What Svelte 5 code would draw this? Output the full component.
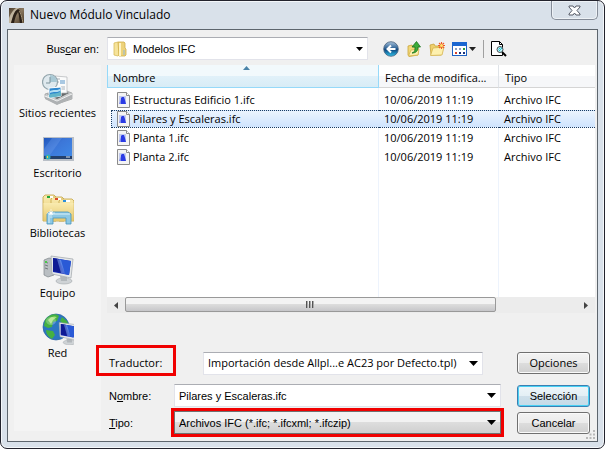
<script>
  let fileName = 'Pilares y Escaleras.ifc'
  let selected = 'Pilares y Escaleras.ifc'

  const places = [
    { id: 'recent', label: 'Sitios recientes' },
    { id: 'desktop', label: 'Escritorio' },
    { id: 'libraries', label: 'Bibliotecas' },
    { id: 'computer', label: 'Equipo' },
    { id: 'network', label: 'Red' }
  ]

  const files = [
    'Estructuras Edificio 1.ifc',
    'Pilares y Escaleras.ifc',
    'Planta 1.ifc',
    'Planta 2.ifc'
  ]

  function pick(file) {
    selected = file
    fileName = file
  }
</script>

<div class="dialog">
  <header>
    <svg class="logo" width="15" height="15" viewBox="0 0 15 15">
      <defs>
        <linearGradient id="logo-bg" x2="1" y2="1">
          <stop offset="0" stop-color="#4f402f" />
          <stop offset="0.5" stop-color="#8a7860" />
          <stop offset="1" stop-color="#4a3b29" />
        </linearGradient>
      </defs>
      <rect width="15" height="15" fill="url(#logo-bg)" />
      <path d="M0 15V10C2 5 4 2 7 0h3L5 6 2 15z" fill="#e0d6c0" opacity="0.700" />
      <path d="M2 15C4 8 5 3 9 1c3 2 4 7 5 14h-3C10 9 10 6 9 4 7 7 6 10 5 15z" fill="#2b2118" />
      <path d="M10 3c2 2 3 7 4 12" fill="none" stroke="#a8977a" />
    </svg>
    <h1>Nuevo Módulo Vinculado</h1>
    <button class="close" aria-label="Cerrar">
      <svg width="13" height="11" viewBox="0 0 13 11">
        <path d="M1 1h4l1.500 2L8 1h4v1L9 5.500 12 9v1H8L6.500 8 5 10H1V9l3-3.500L1 2z" fill="#fff" stroke="#565b67" />
      </svg>
    </button>
  </header>

  <main>
    <div class="lookup">
      <label for="folder">Bus<u>c</u>ar en:</label>
      <div class="combo folder">
        <svg class="folder-icon" width="16" height="16" viewBox="0 0 16 16">
          <path d="M2 2l4-1 1 1v12l-1 1-4-1z" fill="#f6e39a" stroke="#d9bc5c" stroke-width="0.800" />
          <path d="M6 1h6l1 1v5l1 1v6l-1 1H7z" fill="#edd27a" stroke="#cfae4b" stroke-width="0.800" />
          <path d="M8 2v13" stroke="#fff4c4" stroke-width="2" />
          <path d="M12 9v5" stroke="#8fb8d8" />
        </svg>
        <select id="folder">
          <option>Modelos IFC</option>
        </select>
        <svg class="arrow" width="7" height="4"><path d="M0 0h7L3.500 4z" /></svg>
      </div>
      <div class="tools">
        <button aria-label="Atrás">
          <svg width="16" height="16" viewBox="0 0 16 16">
            <defs>
              <linearGradient id="back" x2="0" y2="1">
                <stop offset="0" stop-color="#a9c3dc" />
                <stop offset="0.450" stop-color="#2e6397" />
                <stop offset="0.550" stop-color="#0e4780" />
                <stop offset="1" stop-color="#2fc4ec" />
              </linearGradient>
            </defs>
            <circle cx="8" cy="8" r="7.300" fill="url(#back)" stroke="#49617c" stroke-width="0.800" />
            <path d="M12.500 8H4.500M8 4.500L4.500 8 8 11.500" fill="none" stroke="#fff" stroke-width="2" />
          </svg>
        </button>
        <button aria-label="Subir un nivel">
          <svg width="16" height="16" viewBox="0 0 16 16">
            <path d="M2 5l4-1 1 2h5v8l-9 1.500L2 14z" fill="#f2d878" stroke="#c9a53b" stroke-width="0.800" />
            <path d="M2.500 15L5 9l8-1-1 6z" fill="#fdf0ae" stroke="#d5b44c" stroke-width="0.800" />
            <path d="M6 12c3-1 3-3 3-6H6l4.500-5.500L14.500 6H12c0 4-2 6-6 6z" fill="#3cab38" stroke="#1b7220" stroke-width="0.800" />
          </svg>
        </button>
        <button aria-label="Crear nueva carpeta">
          <svg width="16" height="16" viewBox="0 0 16 16">
            <path d="M1 4l4-1 1 2h6v9H2z" fill="#efd06c" stroke="#c9a53b" stroke-width="0.800" />
            <path d="M1.500 14.500L4 7l11-1-2 8z" fill="#fdf0ae" stroke="#d5b44c" stroke-width="0.800" />
            <path d="M12.500 1v7M9 4.500h7M10 2l5 5M15 2l-5 5" stroke="#ef5c26" stroke-width="1.100" />
            <circle cx="12.500" cy="4.500" r="1.500" fill="#ffe26b" />
          </svg>
        </button>
        <button class="views" aria-label="Menú Ver">
          <svg width="24" height="16" viewBox="0 0 24 16">
            <rect x="0.500" y="1.500" width="14" height="13" fill="#fff" stroke="#1d62c4" />
            <path d="M0 1h15v4H0z" fill="#1a66d0" />
            <path d="M3 7h2v2H3zM7 7h2v2H7z" fill="#8b9ec0" />
            <path d="M11 7h2v2h-2z" fill="#2b9b3a" />
            <path d="M3 11h2v2H3z" fill="#d8432b" />
            <path d="M7 11h2v2H7zM11 11h2v2h-2z" fill="#17327e" />
            <path d="M17 6h7l-3.500 4z" fill="#222" />
          </svg>
        </button>
        <hr />
        <button aria-label="Vista previa">
          <svg width="16" height="16" viewBox="0 0 16 16">
            <path d="M0.500 0.500h8l3 3v11h-11z" fill="#fff" stroke="#000" />
            <path d="M8.500 0.500v3h3" fill="none" stroke="#000" />
            <path d="M11 11l4 4" stroke="#000" stroke-width="2" />
            <circle cx="9" cy="8.500" r="3" fill="#b6f1f7" stroke="#4a4f52" />
            <path d="M7.500 8.500l2-2M8 10l3-3" stroke="#25bfd0" />
          </svg>
        </button>
      </div>
    </div>

    <div class="body">
      <nav>
        {#each places as place}
          <button>
            <svg width="32" height="32" viewBox="0 0 32 32">
              {#if place.id === 'recent'}
                <path d="M3 21l16-5 11 4v6L15 31 3 25z" fill="#c9cbcc" stroke="#96999b" stroke-width="0.700" />
                <path d="M5 21l14-4 8 3-12 6z" fill="#65696b" />
                <path d="M13 3l12 1v16H13z" fill="#fafbfb" stroke="#b1b5b8" stroke-width="0.700" />
                <path d="M14 6h4M14 9h3M19 14h4M19 16h4" stroke="#aab3bb" />
                <path d="M18 7h5v4h-5z" fill="#a9c8e2" />
                <circle cx="8" cy="9" r="7.500" fill="#dfe9ee" stroke="#93a5ac" stroke-width="1.200" />
                <path d="M8 9V2A7 7 0 0 1 15 9z" fill="#a9c9d5" />
                <path d="M8 4v6H4" fill="none" stroke="#7d929a" />
                <path d="M7 15l12-1v9l-12 2z" fill="#2e88ce" stroke="#fff" />
                <path d="M7 22c4-3 7 0 12-4v5L7 25z" fill="#62b5c9" />
                <path d="M8 18c4-2 6 0 10-2v2c-4 2-6 0-10 2z" fill="#b3def3" />
                <path d="M3 24v2l12 6 15-7v-4l-15 6z" fill="#aeb1b3" />
                <path d="M3 23l12 5 15-7" fill="none" stroke="#f1f2f2" />
              {:else if place.id === 'desktop'}
                <defs>
                  <linearGradient id="desk" x2="1" y2="1">
                    <stop offset="0" stop-color="#1e56bc" />
                    <stop offset="0.400" stop-color="#3c76d8" />
                    <stop offset="1" stop-color="#3f8ae8" />
                  </linearGradient>
                </defs>
                <rect x="1" y="4" width="31" height="24" fill="#b9bfc7" />
                <rect x="2" y="5" width="28" height="21" fill="url(#desk)" />
                <path d="M10 5h10L8 22H2v-6z" fill="#78a4ed" opacity="0.300" />
                <path d="M2 23h28v3H2z" fill="#24406b" />
                <circle cx="6" cy="24" r="2.500" fill="#2eafb4" />
                <path d="M5 23h1v2H5z" fill="#f7c948" />
                <path d="M24 24h4" stroke="#d9e7f7" />
              {:else if place.id === 'libraries'}
                <defs>
                  <linearGradient id="lib" x2="0" y2="1">
                    <stop offset="0" stop-color="#f9ebb0" />
                    <stop offset="1" stop-color="#e6c76b" />
                  </linearGradient>
                </defs>
                <path d="M1 4l2-2h9l2 2v24H1z" fill="url(#lib)" stroke="#c3a243" stroke-width="0.800" />
                <path d="M9 6l2-2h9l2 2v22H9z" fill="url(#lib)" stroke="#c3a243" stroke-width="0.800" />
                <path d="M17 8l2-2h11l2 2v20H17z" fill="url(#lib)" stroke="#c3a243" stroke-width="0.800" />
                <path d="M1.500 10h30v18h-30z" fill="url(#lib)" />
                <path d="M5 3h3v2H5z" fill="#22a83a" />
                <path d="M13 5h3v2h-3z" fill="#d94a29" />
                <path d="M21 7h3v2h-3z" fill="#2b8fd9" />
                <path d="M8 3h3v2H8zM16 5h3v2h-3zM24 7h4v2h-4z" fill="#fff" />
                <path d="M5 31V21l2-2h19l3 2v10h-5v-6H11v6z" fill="#8ec8e3" stroke="#4895bd" stroke-width="0.800" />
                <path d="M6 21h22M7 22v8" stroke="#d8f0fa" />
                <path d="M9 16v9M5 20h8M7 18l4 4M11 18l-4 4" stroke="#fff" stroke-width="0.600" />
                <circle cx="9" cy="20" r="1.500" fill="#fff" />
              {:else}
                {#if place.id === 'computer'}
                  <path d="M2 7l5-2 5 1v16l-6 2-4-2z" fill="#b9bec2" stroke="#7e8589" stroke-width="0.700" />
                  <path d="M3 9l3 1M3 12l3 1M3 15l3 1" stroke="#747a7e" />
                  <path d="M3 8h2v2H3z" fill="#49c949" />
                {:else}
                  <circle cx="14" cy="14" r="13" fill="#2c75c2" stroke="#2b63a0" stroke-width="0.700" />
                  <path d="M3 7C7 1 14 0 17 3l-2 5-4 1-1 5-4 1-4-2zM20 4l5 4 2 5-6-2-3-3zM4 17l7 1 2 4-3 4c-4-2-6-5-6-9z" fill="#45b142" />
                  <path d="M6 7c3-4 7-4 9-3l-4 3-2 4z" fill="#a6e27b" />
                  <ellipse cx="9" cy="8" rx="5" ry="4" fill="#fff" opacity="0.250" />
                {/if}
                <g class={place.id}>
                  <ellipse cx="22" cy="28" rx="8" ry="3" fill="#cfd3d6" stroke="#a1a6aa" stroke-width="0.600" />
                  <path d="M18 23l7 1v4h-6z" fill="#b2b7bb" />
                  <path d="M9 3l22 3-2 19-19-4z" fill="#e5e8ea" stroke="#9da3a8" stroke-width="0.700" />
                  <path d="M11 5l18 3-2 14-16-3z" fill="#1429b8" />
                  <path d="M17 6l12 2-2 14-4-1z" fill="#2a5ad6" />
                  <path d="M11 5l6 1 3 14-9-2z" fill="#0f1a94" />
                  <path d="M15 6l4 1 4 14-4-1z" fill="#8bb3f5" opacity="0.500" />
                </g>
              {/if}
            </svg>
            <span>{place.label}</span>
          </button>
        {/each}
      </nav>

      <div class="content">
        <div class="list">
          <table>
            <thead>
              <tr>
                <th class="sorted">
                  <svg width="7" height="4"><path d="M0 4l3.500-4L7 4z" fill="#4b83a8" /></svg>
                  Nombre
                </th>
                <th>Fecha de modifica...</th>
                <th>Tipo</th>
              </tr>
            </thead>
            <tbody>
              {#each files as file}
                <tr class:selected={selected === file} on:click={() => pick(file)}>
                  <td>
                    <div>
                      <svg width="13" height="16" viewBox="0 0 13 16">
                        <path d="M0.500 0.500h9l3 3v12h-12z" fill="#f4f4f4" stroke="#8b8b8b" />
                        <path d="M9.500 0.500v3h3" fill="#fff" stroke="#8b8b8b" />
                        <path d="M2 4h7v8H2z" fill="#c3cbee" />
                        <path d="M4 12V6l1-1h2l1 3 1 4z" fill="#2b3be4" />
                        <path d="M2 12h2V7z" fill="#8490ea" />
                      </svg>
                      {file}
                    </div>
                  </td>
                  <td><div>10/06/2019 11:19</div></td>
                  <td><div>Archivo IFC</div></td>
                </tr>
              {/each}
            </tbody>
          </table>
          <div class="scrollbar">
            <button aria-label="Desplazar a la izquierda">
              <svg width="4" height="7"><path d="M4 0v7L0 3.500z" /></svg>
            </button>
            <div class="track"><div class="thumb"><i></i><i></i><i></i></div></div>
            <button aria-label="Desplazar a la derecha">
              <svg width="4" height="7"><path d="M0 0v7l4-3.500z" /></svg>
            </button>
          </div>
        </div>

        <form on:submit|preventDefault>
          <div class="row translator">
            <label class="marked" for="translator">Traductor:</label>
            <div class="combo">
              <select id="translator">
                <option>Importación desde Allpl...e AC23 por Defecto.tpl)</option>
              </select>
              <svg class="arrow" width="9" height="5"><path d="M0 0h9L4.500 5z" /></svg>
            </div>
            <button type="button" class="push">Opciones</button>
          </div>
          <div class="row">
            <label for="name">N<u>o</u>mbre:</label>
            <div class="combo">
              <input id="name" type="text" bind:value={fileName} />
              <svg class="arrow" width="9" height="5"><path d="M0 0h9L4.500 5z" /></svg>
            </div>
            <button class="push default">Selección</button>
          </div>
          <div class="row">
            <label for="type"><u>T</u>ipo:</label>
            <div class="combo type">
              <select id="type">
                <option>Archivos IFC (*.ifc; *.ifcxml; *.ifczip)</option>
              </select>
              <svg class="arrow" width="9" height="5"><path d="M0 0h9L4.500 5z" /></svg>
            </div>
            <button type="button" class="push">Cancelar</button>
          </div>
        </form>
      </div>
    </div>
    <svg class="grip" width="9" height="9">
      <path d="M7 0h2v2H7zM3.500 3.500h2v2h-2zM7 3.500h2v2H7zM0 7h2v2H0zM3.500 7h2v2h-2zM7 7h2v2H7z" fill="#b9b9b9" />
    </svg>
  </main>
</div>

<style>
  :global(body) {
    background: #fff;
  }

  .dialog {
    box-sizing: border-box;
    min-height: 100vh;
    display: flex;
    flex-direction: column;
    padding: 0 6px 6px;
    border: 1px solid #23232d;
    border-radius: 7px;
    background: #d9e1ea;
    box-shadow: inset 0 0 0 1px #f4f7fa;
    font-family: 'Open Sans', 'Noto Sans', sans-serif;
    font-size: 11px;
    line-height: 16px;
    color: #000;
  }

  button,
  input,
  select {
    font: inherit;
    color: inherit;
    margin: 0;
    padding: 0;
    border: none;
    background: none;
  }

  header {
    display: flex;
    align-items: center;
    gap: 6px;
    height: 28px;
    padding-left: 2px;
  }

  h1 {
    flex: 1;
    margin: 0;
    font-size: 12px;
    font-weight: normal;
  }

  .close {
    align-self: flex-start;
    display: grid;
    place-items: center;
    width: 47px;
    height: 19px;
    border: 1px solid #858c98;
    border-top: none;
    border-radius: 0 0 5px 5px;
    box-shadow: inset 0 0 0 1px #eef2f6;
  }

  main {
    flex: 1;
    position: relative;
    display: flex;
    flex-direction: column;
    padding: 7px 2px 7px 6px;
    border: 1px solid #5d656d;
    background: #f0f0f0;
  }

  .lookup {
    display: flex;
    align-items: center;
    padding-bottom: 5px;
    font-family: 'Liberation Sans', Arial, sans-serif;
  }

  .lookup label {
    width: 85px;
    margin-right: 8px;
    text-align: right;
  }

  .combo {
    flex: 1;
    display: flex;
    align-items: center;
    box-sizing: border-box;
    height: 23px;
    padding: 0 4px;
    border: 1px solid #e2e3ea;
    border-top-color: #abadb3;
    background: #fff;
  }

  .combo select,
  .combo input {
    flex: 1;
    min-width: 0;
    height: 21px;
    appearance: none;
    outline: none;
  }

  .arrow {
    flex: none;
    pointer-events: none;
  }

  .folder-icon {
    margin-right: 5px;
  }

  .tools {
    display: flex;
    align-items: center;
    gap: 7px;
    width: 212px;
    padding-left: 15px;
  }

  .tools button,
  .tools svg {
    display: block;
  }

  .tools hr {
    width: 1px;
    height: 18px;
    margin: 0;
    border: none;
    background: #a0a0a0;
  }

  .body {
    flex: 1;
    display: flex;
    gap: 6px;
  }

  nav {
    width: 87px;
    margin-bottom: 3px;
    padding-top: 8px;
    background: #f4f4f4;
  }

  nav button {
    display: flex;
    flex-direction: column;
    align-items: center;
    width: 100%;
    height: 60px;
  }

  nav svg {
    flex: none;
  }

  nav .network {
    transform: translate(10px, 7px) scale(0.800);
  }

  .content {
    flex: 1;
    min-width: 0;
    display: flex;
    flex-direction: column;
  }

  .list {
    flex: 1;
    display: flex;
    flex-direction: column;
    justify-content: space-between;
    background:
      linear-gradient(#edf3fc, #edf3fc) 271px 0 / 1px 100% no-repeat,
      linear-gradient(#edf3fc, #edf3fc) 391px 0 / 1px 100% no-repeat,
      #fff;
  }

  table {
    width: 100%;
    table-layout: fixed;
    border-collapse: separate;
    border-spacing: 0;
  }

  th {
    box-sizing: border-box;
    position: relative;
    height: 23px;
    padding: 3px 6px 0;
    border-right: 1px solid #dfe3e8;
    border-bottom: 1px solid #d5d5d5;
    background: linear-gradient(#fff 50%, #f6f7f9 50%);
    font-weight: normal;
    text-align: left;
    white-space: nowrap;
  }

  th.sorted {
    width: 272px;
    padding-left: 5px;
    border: 1px solid #96d9f9;
    border-top: none;
    background: linear-gradient(#f2f9fc 50%, #e1f1f9 50%, #d8ecf6);
  }

  th.sorted svg {
    position: absolute;
    top: 1px;
    left: 50%;
  }

  th:nth-child(2) {
    width: 120px;
  }

  th:last-child {
    border-right: none;
  }

  tbody::before {
    content: '';
    display: block;
    height: 2px;
  }

  td {
    height: 19px;
    padding: 0;
    white-space: nowrap;
  }

  td div {
    box-sizing: border-box;
    display: flex;
    align-items: center;
    gap: 3px;
    height: 18px;
    padding-left: 5px;
    border: 1px dotted transparent;
    border-width: 1px 0;
  }

  td:first-child div {
    margin-left: 4px;
    border-left-width: 1px;
  }

  .selected div {
    border-color: #1c3c60;
    background: linear-gradient(#ebf4fe, #cfe4fe);
  }

  .scrollbar {
    display: flex;
    height: 16px;
    background: #ececec;
  }

  .scrollbar button {
    width: 18px;
    display: grid;
    place-items: center;
    fill: #444;
  }

  .track {
    flex: 1;
  }

  .thumb {
    box-sizing: border-box;
    display: flex;
    align-items: center;
    justify-content: center;
    gap: 1px;
    width: 82%;
    height: 15px;
    border: 1px solid #999;
    border-radius: 2px;
    background: linear-gradient(#f3f3f3 50%, #dcdcdc 50%, #c6c6c9);
  }

  .thumb i {
    width: 2px;
    height: 7px;
    background: linear-gradient(90deg, #555 50%, #aaa 50%);
  }

  form {
    padding: 32px 5px 0 0;
  }

  .row {
    display: flex;
    align-items: center;
    height: 23px;
    margin-bottom: 4px;
    font-family: 'Liberation Sans', Arial, sans-serif;
  }

  .row:last-child {
    margin-bottom: 0;
  }

  .row label {
    width: 67px;
    padding-left: 2px;
    box-sizing: border-box;
  }

  .row .combo {
    padding-left: 4px;
    margin-right: 16px;
  }

  .translator {
    height: 36px;
    margin-bottom: 3px;
    font-family: 'Open Sans', 'Noto Sans', sans-serif;
  }

  .row .marked {
    align-self: flex-start;
    width: 80px;
    height: 31px;
    margin-left: -11px;
    margin-right: 27px;
    padding: 7px 0 0 10px;
    border: 3px solid #f00000;
  }

  .translator .combo {
    margin-right: 34px;
  }

  .row .type {
    border: 1px solid #707070;
    background: linear-gradient(#f2f2f2 50%, #dddddd 50%, #cfcfcf);
    outline: 3px solid #f00000;
  }

  .push {
    width: 73px;
    height: 22px;
    border: 1px solid #707070;
    border-radius: 3px;
    background: linear-gradient(#f3f3f3, #ebebeb 50%, #dddddd 50%, #cfcfcf);
    box-shadow: inset 0 0 0 1px #fafafa;
  }

  .default {
    border-color: #3c7fb1;
    background: linear-gradient(#eef6fa, #e3eff5 50%, #cfe0ea 50%, #c4dbe8);
    box-shadow: inset 0 0 0 1px #48d1f5;
  }

  .grip {
    position: absolute;
    right: 2px;
    bottom: 2px;
  }
</style>
